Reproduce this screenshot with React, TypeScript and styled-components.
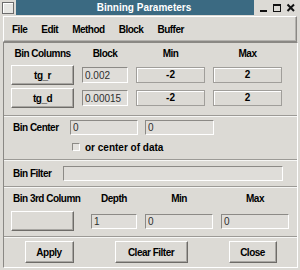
import React from "react";
import styled, { createGlobalStyle } from "styled-components";

// Base page styles
const GlobalStyle = createGlobalStyle`
  html, body {
    margin: 0;
    padding: 0;
    background: #dcdad5;
  }
  body {
    font-family: "Liberation Sans", Arial, sans-serif;
  }
  * {
    box-sizing: border-box;
  }
`;

const Window = styled.div`
  width: 300px;
  height: 270px;
  display: flex;
  flex-direction: column;
  background: #dcdad5;
  overflow: hidden;
`;

// Title bar with window manager decorations
const TitleRow = styled.div`
  display: flex;
  height: 16px;
`;

const TitleIcon = styled.div`
  width: 12px;
  height: 12px;
  margin: 2px 2px 0 2px;
  border: 1px solid #6c6c6c;
  background: #e6e6e3;
  box-shadow: inset 1px 1px 0 #fff;
`;

const TitleBar = styled.div`
  flex: 1;
  height: 15px;
  padding-left: 18px;
  background: #3b6a82;
  color: #fff;
  font-size: 10px;
  font-weight: bold;
  display: flex;
  align-items: center;
  justify-content: center;
`;

const WinControls = styled.svg`
  width: 46px;
  height: 16px;
  flex: none;
  display: block;
`;

// Menu bar
const MenuBar = styled.div`
  height: 26px;
  margin: 0 3px;
  padding-left: 1px;
  display: flex;
  align-items: center;
  border: 1px solid;
  border-color: #fff #8a8884 #8a8884 #fff;
  box-shadow: inset -1px -1px 0 #b4b2ae;
`;

const MenuItem = styled.span`
  padding: 0 7px;
  font-size: 10px;
  font-weight: bold;
  letter-spacing: -0.5px;
  color: #000;
`;

// Main panel and its sections
const Panel = styled.div`
  flex: 1;
  margin: 0 2px 2px 3px;
  display: flex;
  flex-direction: column;
  border: 1px solid;
  border-color: #8a8884 #fff #fff #8a8884;
`;

const Section = styled.div<{ $pt: number; $pb: number; $pl?: number }>`
  padding: ${(p) => p.$pt}px 0 ${(p) => p.$pb}px ${(p) => p.$pl ?? 7}px;
  display: flex;
  flex-direction: column;
`;

const Divider = styled.div`
  height: 2px;
  border-top: 1px solid #9c9a96;
  border-bottom: 1px solid #f6f6f4;
`;

const FieldGrid = styled.div<{ $cols: string; $rows: string }>`
  display: grid;
  grid-template-columns: ${(p) => p.$cols};
  grid-template-rows: ${(p) => p.$rows};
  column-gap: 8px;
  row-gap: 3px;
  align-items: center;
`;

const HeaderCell = styled.div<{ $left?: boolean }>`
  align-self: start;
  height: 14px;
  line-height: 14px;
  padding-left: ${(p) => (p.$left ? "2px" : "0")};
  text-align: ${(p) => (p.$left ? "left" : "center")};
  font-size: 10px;
  font-weight: bold;
  letter-spacing: -0.5px;
  color: #000;
  white-space: nowrap;
`;

const PushButton = styled.button<{ $w?: number; $h?: number }>`
  width: ${(p) => p.$w ?? 63}px;
  height: ${(p) => p.$h ?? 20}px;
  padding: 0;
  margin: 0;
  background: #dcdad5;
  border: 1px solid;
  border-color: #fff #6e6c68 #6e6c68 #fff;
  box-shadow: inset -1px -1px 0 #a8a6a2;
  font-family: "Liberation Sans", Arial, sans-serif;
  font-size: 10px;
  font-weight: bold;
  letter-spacing: -0.5px;
  color: #000;
`;

const Field = styled.input<{ $w?: number; $h?: number }>`
  width: ${(p) => (p.$w ? `${p.$w}px` : "100%")};
  height: ${(p) => p.$h ?? 15}px;
  margin: 0;
  padding: 0 0 0 2px;
  background: #dfddd9;
  border: 1px solid;
  border-color: #8c8a86 #fff #fff #8c8a86;
  outline: none;
  font-family: "Liberation Sans", Arial, sans-serif;
  font-size: 10px;
  color: #2e2e2e;
`;

const ValueBox = styled.div`
  height: 16px;
  line-height: 14px;
  border: 1px solid #a09e9a;
  box-shadow: inset 1px 1px 0 #fff;
  text-align: center;
  font-size: 10px;
  font-weight: bold;
  color: #000;
`;

const FormRow = styled.div<{ $gap?: number }>`
  display: flex;
  align-items: center;
  gap: ${(p) => p.$gap ?? 0}px;
`;

const RowLabel = styled.span<{ $w: number }>`
  width: ${(p) => p.$w}px;
  flex: none;
  font-size: 10px;
  font-weight: bold;
  letter-spacing: -0.5px;
  color: #000;
`;

const CheckRow = styled.label`
  height: 12px;
  margin: 6px 0 0 59px;
  display: flex;
  align-items: center;
  gap: 5px;
  font-size: 10px;
  font-weight: bold;
  color: #000;
`;

const CheckBox = styled.span`
  width: 8px;
  height: 8px;
  border: 1px solid;
  border-color: #8c8a86 #fff #fff #8c8a86;
  background: #e4e2de;
`;

const ButtonBar = styled.div`
  flex: 1;
  padding: 3px 0 4px;
  display: flex;
  align-items: center;
  justify-content: space-around;
`;

const App = () => (
  <>
    <GlobalStyle />
    <Window>
      <TitleRow>
        <TitleIcon />
        <TitleBar>Binning Parameters</TitleBar>
        <WinControls viewBox="0 0 46 16">
          <rect x="6" y="10" width="7" height="2" fill="#111" />
          <path d="M19 4h8v8h-8z M20 6v5h6v-5z" fill="#111" fillRule="evenodd" />
          <path d="M33.5 4.5l6.5 6.5M40 4.5l-6.5 6.5" stroke="#111" strokeWidth="2" />
        </WinControls>
      </TitleRow>

      <MenuBar>
        {["File", "Edit", "Method", "Block", "Buffer"].map((m) => (
          <MenuItem key={m}>{m}</MenuItem>
        ))}
      </MenuBar>

      <Panel>
        <Section $pt={4} $pb={7}>
          <FieldGrid $cols="63px 46px 69px 69px" $rows="15px 20px 20px">
            <HeaderCell>Bin Columns</HeaderCell>
            <HeaderCell>Block</HeaderCell>
            <HeaderCell>Min</HeaderCell>
            <HeaderCell>Max</HeaderCell>

            <PushButton>tg_r</PushButton>
            <Field $h={16} readOnly value="0.002" />
            <ValueBox>-2</ValueBox>
            <ValueBox>2</ValueBox>

            <PushButton>tg_d</PushButton>
            <Field $h={16} readOnly value="0.00015" />
            <ValueBox>-2</ValueBox>
            <ValueBox>2</ValueBox>
          </FieldGrid>
        </Section>
        <Divider />

        <Section $pt={3} $pb={6} $pl={9}>
          <FormRow $gap={7}>
            <RowLabel $w={50}>Bin Center</RowLabel>
            <Field $w={68} readOnly value="0" />
            <Field $w={69} readOnly value="0" />
          </FormRow>
          <CheckRow>
            <CheckBox />
            or center of data
          </CheckRow>
        </Section>
        <Divider />

        <Section $pt={5} $pb={5} $pl={9}>
          <FormRow>
            <RowLabel $w={50}>Bin Filter</RowLabel>
            <Field $w={220} readOnly value="" />
          </FormRow>
        </Section>
        <Divider />

        <Section $pt={4} $pb={5}>
          <FieldGrid $cols="72px 46px 68px 68px" $rows="16px 20px">
            <HeaderCell $left>Bin 3rd Column</HeaderCell>
            <HeaderCell>Depth</HeaderCell>
            <HeaderCell>Min</HeaderCell>
            <HeaderCell>Max</HeaderCell>

            <PushButton />
            <Field readOnly value="1" />
            <Field readOnly value="0" />
            <Field readOnly value="0" />
          </FieldGrid>
        </Section>
        <Divider />

        <ButtonBar>
          <PushButton $w={49} $h={22}>Apply</PushButton>
          <PushButton $w={73} $h={22}>Clear Filter</PushButton>
          <PushButton $w={48} $h={22}>Close</PushButton>
        </ButtonBar>
      </Panel>
    </Window>
  </>
);

export default App;
